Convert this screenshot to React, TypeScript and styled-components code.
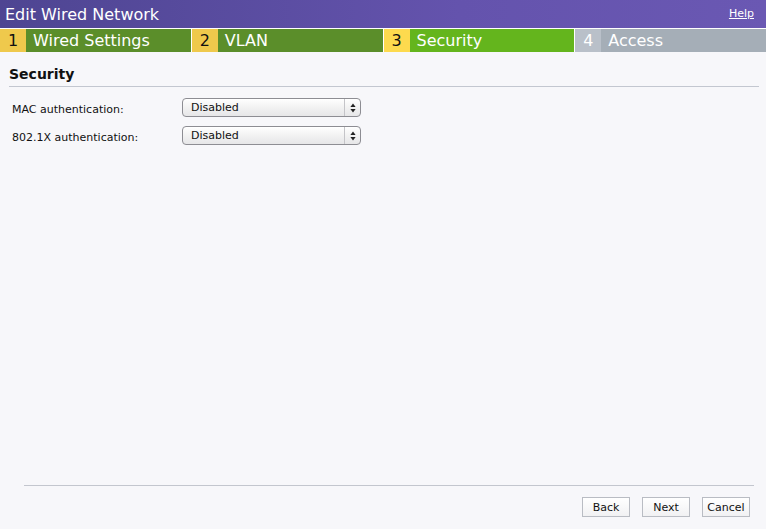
import React from "react";
import styled, { createGlobalStyle } from "styled-components";

const Global = createGlobalStyle`
  html, body { margin: 0; padding: 0; background: #f7f7fa; }
  body { font-family: "DejaVu Sans", Verdana, sans-serif; }
  * { box-sizing: border-box; }
`;

const Page = styled.div`
  width: 766px;
  height: 529px;
  display: flex;
  flex-direction: column;
  background: #f7f7fa;
  overflow: hidden;
`;

const Header = styled.div`
  height: 28px;
  display: flex;
  align-items: center;
  justify-content: space-between;
  padding: 0 12px 0 5px;
  background: linear-gradient(to right, #4e4592, #6453ad 60%, #6a58b3);
  border-bottom: 1px solid #ffffff;
  box-sizing: content-box;
`;

const Title = styled.div`
  color: #ffffff;
  font-size: 16px;
`;

const HelpLink = styled.a`
  color: #ffffff;
  font-size: 11px;
  text-decoration: underline;
  margin-top: -2px;
`;

const Tabs = styled.div`
  display: flex;
  gap: 1px;
  height: 23px;
  background: #ffffff;
`;

type TabState = "done" | "active" | "todo";

const numBg: Record<TabState, string> = {
  done: "#efc94c",
  active: "#fdda4e",
  todo: "#b9c0c9",
};
const labelBg: Record<TabState, string> = {
  done: "#5b8e2a",
  active: "#64b51d",
  todo: "#a5aeb7",
};

const Tab = styled.div`
  flex: 1;
  display: flex;
  font-size: 16px;
`;

const TabNum = styled.div<{ $state: TabState }>`
  width: 26px;
  display: flex;
  align-items: center;
  justify-content: center;
  background: ${(p) => numBg[p.$state]};
  color: ${(p) => (p.$state === "todo" ? "#ffffff" : "#111111")};
`;

const TabLabel = styled.div<{ $state: TabState }>`
  flex: 1;
  display: flex;
  align-items: center;
  padding-left: 7px;
  background: ${(p) => labelBg[p.$state]};
  color: #ffffff;
`;

const Body = styled.div`
  flex: 1;
  display: flex;
  flex-direction: column;
  padding: 14px 7px 0 9px;
`;

const SectionTitle = styled.div`
  font-size: 14px;
  font-weight: bold;
  color: #111111;
  padding-bottom: 4px;
  border-bottom: 1px solid #c3c7d0;
`;

const Form = styled.div`
  display: grid;
  grid-template-columns: 170px 179px;
  row-gap: 9px;
  align-items: center;
  padding: 11px 0 0 3px;
`;

const Label = styled.div`
  font-size: 11px;
  color: #111111;
  padding-top: 4px;
`;

const Select = styled.div`
  height: 19px;
  display: flex;
  align-items: stretch;
  border: 1px solid #8d8d93;
  border-radius: 4px;
  background: linear-gradient(to bottom, #ffffff, #f2f2f2 50%, #e6e6e8);
  box-shadow: inset 0 1px 0 #ffffff;
  font-size: 11px;
  color: #111111;
`;

const SelectText = styled.div`
  flex: 1;
  display: flex;
  align-items: center;
  padding-left: 8px;
`;

const SelectArrow = styled.div`
  width: 16px;
  display: flex;
  align-items: center;
  justify-content: center;
  border-left: 1px solid #c4c4c8;
`;

const Spacer = styled.div`
  flex: 1;
`;

const Footer = styled.div`
  display: flex;
  flex-direction: column;
  padding: 0 12px 12px 24px;
`;

const FooterRule = styled.div`
  height: 1px;
  background: #c3c6ce;
`;

const Buttons = styled.div`
  display: flex;
  justify-content: flex-end;
  gap: 12px;
  padding-top: 11px;
  padding-right: 4px;
`;

const Button = styled.button`
  width: 48px;
  height: 20px;
  padding: 0;
  font-family: "DejaVu Sans", Verdana, sans-serif;
  font-size: 11px;
  color: #111111;
  border: 1px solid #b9bcc3;
  border-radius: 0;
  background: linear-gradient(to bottom, #ffffff, #f1f1f3);
`;

const Arrows = () => (
  <svg width="6" height="10" viewBox="0 0 6 10">
    <path d="M3 0.5 L5.6 4 L0.4 4 Z" fill="#222" />
    <path d="M3 9.5 L5.6 6 L0.4 6 Z" fill="#222" />
  </svg>
);

const steps: { n: number; label: string; state: TabState }[] = [
  { n: 1, label: "Wired Settings", state: "done" },
  { n: 2, label: "VLAN", state: "done" },
  { n: 3, label: "Security", state: "active" },
  { n: 4, label: "Access", state: "todo" },
];

const fields = ["MAC authentication:", "802.1X authentication:"];

export default function App() {
  return (
    <Page>
      <Global />
      <Header>
        <Title>Edit Wired Network</Title>
        <HelpLink href="#">Help</HelpLink>
      </Header>
      <Tabs>
        {steps.map((s) => (
          <Tab key={s.n}>
            <TabNum $state={s.state}>{s.n}</TabNum>
            <TabLabel $state={s.state}>{s.label}</TabLabel>
          </Tab>
        ))}
      </Tabs>
      <Body>
        <SectionTitle>Security</SectionTitle>
        <Form>
          {fields.map((f) => (
            <React.Fragment key={f}>
              <Label>{f}</Label>
              <Select>
                <SelectText>Disabled</SelectText>
                <SelectArrow>
                  <Arrows />
                </SelectArrow>
              </Select>
            </React.Fragment>
          ))}
        </Form>
      </Body>
      <Spacer />
      <Footer>
        <FooterRule />
        <Buttons>
          <Button>Back</Button>
          <Button>Next</Button>
          <Button>Cancel</Button>
        </Buttons>
      </Footer>
    </Page>
  );
}
